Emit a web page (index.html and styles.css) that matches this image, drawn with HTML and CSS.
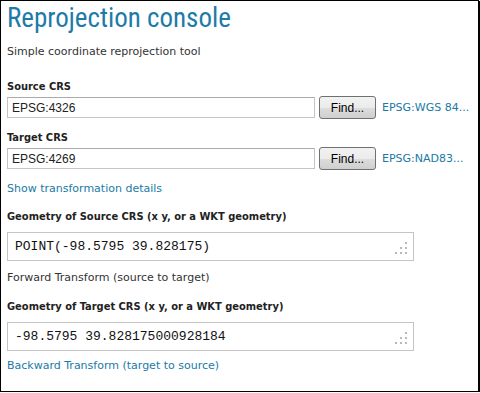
FILE: index.html
```html
<!DOCTYPE html>
<html>
<head>
<meta charset="utf-8">
<link rel="stylesheet" href="styles.css">
</head>
<body>
<div class="console">
  <h1 class="title">Reprojection console</h1>
  <p class="subtitle">Simple coordinate reprojection tool</p>

  <div class="label first">Source CRS</div>
  <div class="crs-row">
    <input class="crs-input" type="text" value="EPSG:4326">
    <button class="find-btn">Find...</button>
    <a class="crs-link" href="#">EPSG:WGS 84...</a>
  </div>

  <div class="label second">Target CRS</div>
  <div class="crs-row">
    <input class="crs-input" type="text" value="EPSG:4269">
    <button class="find-btn">Find...</button>
    <a class="crs-link" href="#">EPSG:NAD83...</a>
  </div>

  <a class="link show-details" href="#">Show transformation details</a>

  <div class="label geom">Geometry of Source CRS (x y, or a WKT geometry)</div>
  <div class="geom-box">
    <textarea class="geom-text">POINT(-98.5795 39.828175)</textarea>
    <svg class="grip" width="12" height="12" viewBox="0 0 12 12"><rect x="10" y="0" width="2" height="2"/><rect x="5" y="5" width="2" height="2"/><rect x="10" y="5" width="2" height="2"/><rect x="0" y="10" width="2" height="2"/><rect x="5" y="10" width="2" height="2"/><rect x="10" y="10" width="2" height="2"/></svg>
  </div>
  <div class="plain forward">Forward Transform (source to target)</div>

  <div class="label geom2">Geometry of Target CRS (x y, or a WKT geometry)</div>
  <div class="geom-box">
    <textarea class="geom-text">-98.5795 39.828175000928184</textarea>
    <svg class="grip" width="12" height="12" viewBox="0 0 12 12"><rect x="10" y="0" width="2" height="2"/><rect x="5" y="5" width="2" height="2"/><rect x="10" y="5" width="2" height="2"/><rect x="0" y="10" width="2" height="2"/><rect x="5" y="10" width="2" height="2"/><rect x="10" y="10" width="2" height="2"/></svg>
  </div>
  <a class="link backward" href="#">Backward Transform (target to source)</a>
</div>
</body>
</html>
```

FILE: styles.css
```css
html, body {
  margin: 0;
  padding: 0;
  background: #fff;
}

.console {
  box-sizing: border-box;
  width: 479px;
  height: 392px;
  border: 1px solid #000;
  box-shadow: 1px 1px 0 #000;
  padding: 0 0 0 6px;
  font-family: "DejaVu Sans", Verdana, sans-serif;
  font-size: 11px;
  line-height: 14px;
  color: #222;
  display: flex;
  flex-direction: column;
  align-items: flex-start;
}

.title {
  margin: 0;
  font-family: "Roboto Condensed", "DejaVu Sans Condensed", sans-serif;
  font-size: 27px;
  line-height: 34px;
  font-weight: normal;
  color: #1d7ba8;
}

.subtitle {
  margin: 10px 0 0;
  color: #333;
}

.label {
  font-family: "DejaVu Sans Condensed", "DejaVu Sans", sans-serif;
  font-weight: bold;
  color: #222;
  margin-bottom: 2px;
}

.label.first { margin-top: 21px; }
.label.second { margin-top: 12px; }
.label.geom { margin-top: 14px; margin-bottom: 8px; }
.label.geom2 { margin-top: 15px; margin-bottom: 8px; }

.crs-row {
  display: flex;
  align-items: center;
  height: 23px;
}

.crs-input {
  box-sizing: border-box;
  width: 308px;
  height: 21px;
  margin: 0;
  padding: 0 4px;
  border: 1px solid #c4c4c4;
  border-top-color: #ababab;
  font-family: "Liberation Sans", Arial, sans-serif;
  font-size: 12px;
  color: #222;
  outline: none;
}

.find-btn {
  box-sizing: border-box;
  width: 57px;
  height: 23px;
  margin: 0 0 0 4px;
  padding: 0;
  border: 1px solid #707070;
  border-radius: 3px;
  background: linear-gradient(#f2f2f2 0%, #ebebeb 50%, #dddddd 51%, #cfcfcf 100%);
  font-family: "Liberation Sans", Arial, sans-serif;
  font-size: 12px;
  color: #000;
}

.crs-link {
  margin-left: 6px;
  color: #1a7aa5;
  text-decoration: none;
}

.link {
  color: #1a7aa5;
  text-decoration: none;
}

.show-details { margin-top: 12px; }

.geom-box {
  position: relative;
  width: 407px;
  height: 29px;
}

.geom-text {
  box-sizing: border-box;
  display: block;
  width: 407px;
  height: 29px;
  margin: 0;
  padding: 6px 7px;
  border: 1px solid #c4c4c4;
  resize: none;
  overflow: hidden;
  font-family: "Courier New", "Nimbus Mono PS", FreeMono, "Liberation Mono", monospace;
  font-size: 13px;
  line-height: 15px;
  color: #111;
  outline: none;
}

.grip {
  position: absolute;
  right: 7px;
  bottom: 7px;
  fill: #b8b8b8;
}

.plain { color: #333; }
.forward { margin-top: 10px; }
.backward { margin-top: 8px; }
```
